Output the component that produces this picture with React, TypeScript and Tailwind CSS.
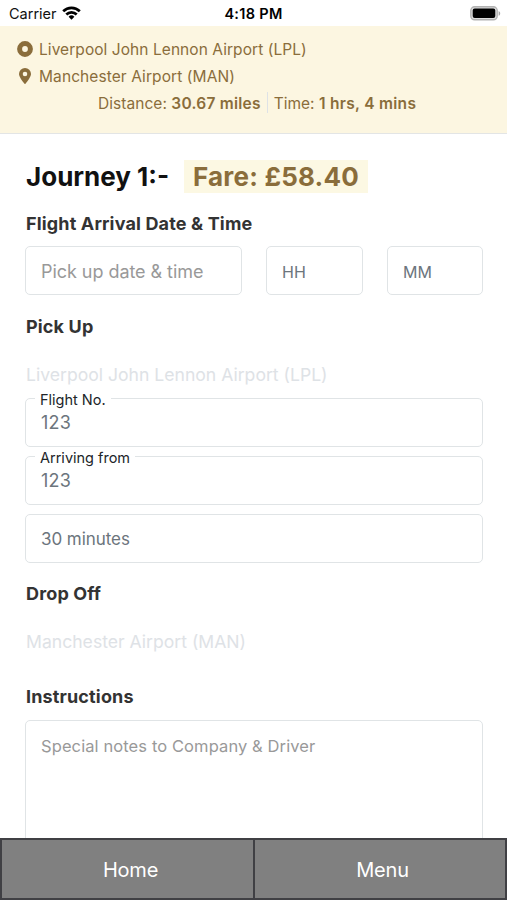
import type { ReactNode } from 'react';

function WifiIcon() {
  return (
    <svg width="19" height="14" viewBox="0 0 19 14" fill="none" stroke="#000" strokeWidth="2.7">
      <path d="M1.2 5.2a11.8 11.8 0 0 1 16.6 0" />
      <path d="M4.3 8.5a7.4 7.4 0 0 1 10.4 0" />
      <path d="M9.5 13.8 6.6 10.8a4.1 4.1 0 0 1 5.8 0Z" fill="#000" stroke="none" />
    </svg>
  );
}

function BatteryIcon() {
  return (
    <svg width="31" height="15" viewBox="0 0 31 15">
      <rect x="0.8" y="0.8" width="26.4" height="13" rx="3.8" fill="#ddd" stroke="#b2b2b2" strokeWidth="1.4" />
      <rect x="2.7" y="2.6" width="22.6" height="9.4" rx="2" fill="#000" />
      <path d="M28.6 5v4.8c1-.4 1.6-1.3 1.6-2.4S29.6 5.4 28.6 5Z" fill="#a6a6a6" />
    </svg>
  );
}

function StatusBar() {
  return (
    <div className="grid h-[26px] grid-cols-3 items-center pr-[6px] pl-[9px] text-[14.5px] text-[#111]">
      <div className="flex items-center gap-[5px]">
        <span className="pt-[2px]">Carrier</span>
        <WifiIcon />
      </div>
      <span className="pt-[2px] pr-[3px] text-center font-semibold tracking-[0.3px] whitespace-nowrap text-black">
        4:18 PM
      </span>
      <div className="flex justify-end">
        <BatteryIcon />
      </div>
    </div>
  );
}

function RouteBanner() {
  return (
    <div className="h-[108px] border-b border-[#e3e5e5] bg-[#fcf6e1] pt-[9px] text-[15.5px] leading-[27px] text-[#8a6d3b]">
      <div className="flex h-[27px] items-center pl-[17px]">
        <svg width="16" height="16" viewBox="0 0 16 16" className="mr-[6px]">
          <circle cx="8" cy="8" r="5.4" fill="none" stroke="#8a6d3b" strokeWidth="5" />
        </svg>
        <span className="pt-px tracking-[0.06px]">Liverpool John Lennon Airport (LPL)</span>
      </div>
      <div className="flex h-[27px] items-center pl-[17px]">
        <svg width="16" height="16" viewBox="0 0 16 16" className="mr-[6px]">
          <path
            fillRule="evenodd"
            fill="#8a6d3b"
            d="M8 0a6 6 0 0 1 6 6c0 2.7-3.5 7.2-5.3 9.6a.9.9 0 0 1-1.4 0C5.5 13.2 2 8.7 2 6a6 6 0 0 1 6-6Zm0 3.7a2.3 2.3 0 1 0 0 4.6 2.3 2.3 0 0 0 0-4.6Z"
          />
        </svg>
        <span className="pt-px tracking-[0.09px]">Manchester Airport (MAN)</span>
      </div>
      <div className="flex h-[27px] items-center pl-[98px]">
        <span className="pt-px">
          <span className="tracking-[0.05px]">Distance:</span>{' '}
          <b className="font-semibold tracking-[0.25px]">30.67 miles</b>
        </span>
        <span className="mr-[6px] ml-[6px] h-[21px] w-px bg-[#dee2e6]" />
        <span className="pt-px">
          Time: <b className="font-semibold tracking-[0.3px]">1 hrs, 4 mins</b>
        </span>
      </div>
    </div>
  );
}

function Heading({ children }: { children: ReactNode }) {
  return <h2 className="pl-px text-[18px] leading-[24px] font-bold tracking-[0.15px] text-[#333]">{children}</h2>;
}

function Box({ children, className }: { children: ReactNode; className: string }) {
  return (
    <div className={`flex h-[49px] items-center rounded-[5px] border border-[#e0e4e6] pl-[15px] ${className}`}>
      {children}
    </div>
  );
}

function LabelledBox({ label, value }: { label: string; value: string }) {
  return (
    <div className="relative flex h-[49px] items-center rounded-[5px] border border-[#e0e4e6] pl-[15px] text-[18px] text-[#6c757d]">
      <span className="absolute top-[-9px] left-[9px] bg-white px-[5px] text-[14.5px] leading-[20px] text-[#212529]">
        {label}
      </span>
      <span className="tracking-[0.2px]">{value}</span>
    </div>
  );
}

export default function App() {
  return (
    <div className="flex h-[900px] w-[507px] flex-col overflow-hidden bg-white font-['Inter','Liberation_Sans',sans-serif]">
      <StatusBar />
      <RouteBanner />
      <main className="min-h-0 flex-1 overflow-hidden pr-[24px] pl-[25px]">
        <div className="mt-[26px] flex h-[33px] items-center text-[26px] font-bold">
          <h1 className="w-[159px] pl-px whitespace-nowrap text-[#111]">Journey 1:-</h1>
          <span className="h-[33px] w-[184px] bg-[#fcf8e3] pl-[9px] leading-[34px] tracking-[0.2px] whitespace-nowrap text-[#8a6d3b]">
            Fare: £58.40
          </span>
        </div>
        <div className="mt-[19px]">
          <Heading>Flight Arrival Date &amp; Time</Heading>
        </div>
        <div className="mt-[10px] flex gap-[24px]">
          <Box className="w-[217px] pt-px text-[18px] tracking-[-0.05px] text-[#999]">Pick up date &amp; time</Box>
          <Box className="w-[97px] pt-[2px] text-[16px] text-[#6c757d]">HH</Box>
          <Box className="w-[96px] pt-[2px] text-[16px] text-[#6c757d]">MM</Box>
        </div>
        <div className="mt-[20px]">
          <Heading>Pick Up</Heading>
        </div>
        <p className="mt-[23px] pl-px text-[17.6px] leading-[26px] text-[#dee2e6]">
          Liverpool John Lennon Airport (LPL)
        </p>
        <div className="mt-[10px] flex flex-col gap-[9px]">
          <LabelledBox label="Flight No." value="123" />
          <LabelledBox label="Arriving from" value="123" />
          <Box className="pt-[2px] text-[17px] tracking-[-0.05px] text-[#6c757d]">30 minutes</Box>
        </div>
        <div className="mt-[19px]">
          <Heading>Drop Off</Heading>
        </div>
        <p className="mt-[23px] pl-px text-[17.6px] leading-[26px] text-[#dee2e6]">Manchester Airport (MAN)</p>
        <div className="mt-[30px]">
          <Heading>Instructions</Heading>
        </div>
        <div className="mt-[11px] h-[160px] rounded-[5px] border border-[#e0e4e6] pt-[13px] pl-[15px] text-[16.5px] leading-[24px] tracking-[0.1px] text-[#999]">
          Special notes to Company &amp; Driver
        </div>
      </main>
      <nav className="flex h-[62px] gap-[2px] border-2 border-[#404044] bg-[#404044] text-[20px] text-white">
        <div className="flex w-[251px] items-center justify-center bg-[#808080] pt-[2px] pl-[6px] tracking-[-0.2px]">
          Home
        </div>
        <div className="flex flex-1 items-center justify-center bg-[#808080] pt-[2px] pl-[5px] tracking-[-0.2px]">
          Menu
        </div>
      </nav>
    </div>
  );
}
